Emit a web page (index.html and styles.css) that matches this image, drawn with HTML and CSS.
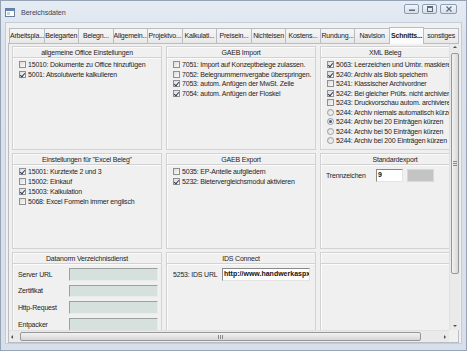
FILE: index.html
```html
<!DOCTYPE html>
<html lang="de">
<head>
<meta charset="utf-8">
<title>Bereichsdaten</title>
<link rel="stylesheet" href="styles.css">
</head>
<body>
<div class="window">
  <div class="titlebar">
    <svg class="appicon" width="10" height="9" viewBox="0 0 10 9"><rect x="0.5" y="0.5" width="9" height="8" fill="#fff" stroke="#6a7f99"/><rect x="1" y="1" width="8" height="2" fill="#5b84c4"/><rect x="2" y="4" width="3" height="3" fill="#c9d3df"/></svg>
    <span class="title">Bereichsdaten</span>
    <div class="controls">
      <span class="wbtn"><svg width="8" height="6" viewBox="0 0 8 6"><rect x="1" y="3.5" width="6" height="1.5" fill="#5d6b7c"/></svg></span>
      <span class="wbtn"><svg width="8" height="6" viewBox="0 0 8 6"><rect x="1.5" y="0.5" width="5" height="5" fill="none" stroke="#5d6b7c"/><rect x="1.5" y="0.5" width="5" height="1.5" fill="#5d6b7c"/></svg></span>
      <span class="wbtn close"><svg width="8" height="6" viewBox="0 0 8 6"><path d="M1.5 0.5 L6.5 5.5 M6.5 0.5 L1.5 5.5" stroke="#5d6b7c" stroke-width="1.2"/></svg></span>
    </div>
  </div>
  <div class="client">
    <div class="tabs">
      <span class="tab">Arbeitspla...</span>
      <span class="tab">Belegarten</span>
      <span class="tab">Belegn...</span>
      <span class="tab">Allgemein...</span>
      <span class="tab">Projektvo...</span>
      <span class="tab">Kalkulati...</span>
      <span class="tab">Preisein...</span>
      <span class="tab">Nichteisen</span>
      <span class="tab">Kostens...</span>
      <span class="tab">Rundung...</span>
      <span class="tab">Navision</span>
      <span class="tab active">Schnitts...</span>
      <span class="tab">sonstiges</span>
    </div>
    <div class="page">
      <div class="main">
        <div class="viewport">
          <div class="grid">
            <section class="cell">
              <div class="head">allgemeine Office Einstellungen</div>
              <div class="list">
                <label class="item"><span class="cb"></span>15010: Dokumente zu Office hinzufügen</label>
                <label class="item"><span class="cb on"></span>5001: Absolutwerte kalkulieren</label>
              </div>
            </section>
            <section class="cell">
              <div class="head">GAEB Import</div>
              <div class="list">
                <label class="item"><span class="cb"></span>7051: Import auf Konzeptbelege zulassen.</label>
                <label class="item"><span class="cb"></span>7052: Belegnummernvergabe überspringen.</label>
                <label class="item"><span class="cb on"></span>7053: autom. Anfügen der MwSt. Zeile</label>
                <label class="item"><span class="cb on"></span>7054: autom. Anfügen der Floskel</label>
              </div>
            </section>
            <section class="cell">
              <div class="head xml">XML Beleg</div>
              <div class="list">
                <label class="item"><span class="cb on"></span>5063: Leerzeichen und Umbr. maskieren</label>
                <label class="item"><span class="cb on"></span>5240: Archiv als Blob speichern</label>
                <label class="item"><span class="cb"></span>5241: Klassischer Archivordner</label>
                <label class="item"><span class="cb on"></span>5242: Bei gleicher Prüfs. nicht archivieren</label>
                <label class="item"><span class="cb"></span>5243: Druckvorschau autom. archivieren</label>
                <label class="item"><span class="rb"></span>5244: Archiv niemals automatisch kürzen</label>
                <label class="item"><span class="rb on"></span>5244: Archiv bei 20 Einträgen kürzen</label>
                <label class="item"><span class="rb"></span>5244: Archiv bei 50 Einträgen kürzen</label>
                <label class="item"><span class="rb"></span>5244: Archiv bei 200 Einträgen kürzen</label>
              </div>
            </section>

            <section class="cell">
              <div class="head">Einstellungen für "Excel Beleg"</div>
              <div class="list wide">
                <label class="item"><span class="cb on"></span>15001: Kurztexte 2 und 3</label>
                <label class="item"><span class="cb"></span>15002: Einkauf</label>
                <label class="item"><span class="cb on"></span>15003: Kalkulation</label>
                <label class="item"><span class="cb"></span>5068: Excel Formeln immer englisch</label>
              </div>
            </section>
            <section class="cell">
              <div class="head">GAEB Export</div>
              <div class="list wide">
                <label class="item"><span class="cb"></span>5035: EP-Anteile aufgliedern</label>
                <label class="item"><span class="cb on"></span>5232: Bietervergleichsmodul aktivieren</label>
              </div>
            </section>
            <section class="cell">
              <div class="head">Standardexport</div>
              <div class="form">
                <div class="frow">
                  <span class="flabel sep">Trennzeichen</span>
                  <span class="input white bold small">9</span>
                  <span class="input gray small"></span>
                </div>
              </div>
            </section>

            <section class="cell">
              <div class="head">Datanorm Verzeichnisdienst</div>
              <div class="form">
                <div class="frow"><span class="flabel">Server URL</span><span class="input dis"></span></div>
                <div class="frow"><span class="flabel">Zertifikat</span><span class="input dis"></span></div>
                <div class="frow"><span class="flabel">Http-Request</span><span class="input dis"></span></div>
                <div class="frow"><span class="flabel">Entpacker</span><span class="input dis"></span></div>
              </div>
            </section>
            <section class="cell">
              <div class="head">IDS Connect</div>
              <div class="form">
                <div class="frow"><span class="flabel ids">5253: IDS URL</span><span class="input white bold url">http://www.handwerkaspx.de/ids</span></div>
              </div>
            </section>
            <section class="cell">
              <div class="head"></div>
            </section>
          </div>
        </div>
        <div class="vscroll">
          <span class="arrow up"></span>
          <span class="vthumb"><span class="vgrip"></span></span>
          <span class="vspace"></span>
          <span class="arrow down"></span>
        </div>
      </div>
      <div class="hrow">
        <div class="hscroll">
          <span class="arrow left"></span>
          <span class="hthumb"><span class="hgrip"></span></span>
          <span class="hspace"></span>
          <span class="arrow right"></span>
        </div>
        <div class="corner"></div>
      </div>
    </div>
  </div>
</div>
</body>
</html>
```
FILE: styles.css
```css
* { box-sizing: border-box; }
html, body { margin: 0; padding: 0; background: #dfe6ef; }
body {
  font-family: "Liberation Sans", Arial, sans-serif;
  font-size: 7px;
  letter-spacing: -0.2px;
  color: #1e1e1e;
}
.window {
  width: 467px;
  height: 351px;
  display: flex;
  flex-direction: column;
  background: linear-gradient(#e6ecf4, #d9e2ed 40px, #d6dfea);
  border: 1px solid #95a3b4;
  overflow: hidden;
}
.titlebar {
  height: 21px;
  flex: 0 0 21px;
  display: flex;
  align-items: center;
  padding-left: 4px;
}
.appicon { margin-right: 6px; margin-top: 1px; }
.title { color: #3a4656; font-size: 7.2px; letter-spacing: -0.1px; margin-top: 1px; }
.controls {
  margin-left: auto;
  margin-right: 9px;
  display: flex;
  gap: 3px;
  align-self: flex-start;
  margin-top: 3px;
}
.wbtn {
  width: 15px;
  height: 10px;
  border: 1px solid #8e9cb0;
  border-radius: 2px;
  background: linear-gradient(#f1f5fa, #d6dfea);
  display: flex;
  align-items: center;
  justify-content: center;
}
.wbtn.close { width: 17px; }
.client {
  flex: 1;
  min-height: 0;
  margin: 0 4px 6px 4px;
  background: #f0f0f0;
  padding: 4px 2px 0 2px;
  display: flex;
  flex-direction: column;
  border: 1px solid #c3cdd9;
}
.tabs {
  display: flex;
  height: 16px;
  flex: 0 0 16px;
  margin-left: 1px;
  width: 450px;
  align-items: flex-end;
}
.tab {
  flex: 1 1 0;
  height: 15px;
  border: 1px solid #b9bdc3;
  border-bottom: none;
  margin-left: -1px;
  background: linear-gradient(#f6f6f6, #e8e8e8);
  text-align: center;
  line-height: 14px;
  white-space: nowrap;
  overflow: hidden;
  color: #222;
}
.tab:first-child { margin-left: 0; }
.tab.active {
  height: 17px;
  margin-bottom: -1px;
  background: #fbfbfb;
  font-weight: bold;
  position: relative;
  z-index: 1;
  line-height: 16px;
}
.page {
  flex: 1;
  min-height: 0;
  border: 1px solid #b9bdc3;
  display: flex;
  flex-direction: column;
  background: #f0f0f0;
}
.main { flex: 1; display: flex; min-height: 0; }
.viewport {
  width: 440px;
  flex: 0 0 440px;
  overflow: hidden;
  padding: 2px 0 0 3px;
}
.grid {
  display: grid;
  grid-template-columns: 150px 150px 150px;
  grid-template-rows: 104px 96px 100px;
  column-gap: 4px;
  row-gap: 3px;
  width: 460px;
}
.cell {
  border: 1px solid #d2d2d2;
  box-shadow: inset 1px 1px 0 #fbfbfb;
  min-width: 0;
  overflow: hidden;
}
.head {
  height: 11px;
  line-height: 10px;
  text-align: center;
  border-bottom: 1px solid #d2d2d2;
  border-top: 1px solid #fbfbfb;
  box-shadow: 0 1px 0 #fbfbfb;
  white-space: nowrap;
}
.head.xml { padding-right: 20px; }
.list { padding: 2px 0 0 6px; }
.item {
  display: flex;
  align-items: center;
  height: 9.5px;
  white-space: nowrap;
}
.list.wide .item { height: 9.8px; }
.cb, .rb {
  width: 7px;
  height: 7px;
  flex: 0 0 7px;
  margin-right: 2px;
  border: 1px solid #8f8f8f;
  background: linear-gradient(135deg, #dcdcdc, #fafafa);
  position: relative;
}
.cb.on::after {
  content: "";
  position: absolute;
  left: 1px;
  top: 0px;
  width: 2px;
  height: 4px;
  border-right: 1px solid #2b3a55;
  border-bottom: 1px solid #2b3a55;
  transform: rotate(40deg);
}
.rb { border-radius: 50%; border-color: #9a9a9a; }
.rb.on::after {
  content: "";
  position: absolute;
  left: 1px;
  top: 1px;
  width: 3px;
  height: 3px;
  border-radius: 50%;
  background: #3b5d8f;
}
.form {
  padding: 4px 0 0 5px;
  display: flex;
  flex-direction: column;
  gap: 4.2px;
}
.frow { display: flex; align-items: center; height: 12.5px; }
.flabel { width: 51px; flex: 0 0 51px; white-space: nowrap; }
.flabel.ids { width: 50px; flex-basis: 50px; padding-left: 1px; }
.flabel.sep { width: 50px; flex-basis: 50px; }
.input {
  height: 12.5px;
  border: 1px solid #8a8a8a;
  border-right-color: #e4e4e4;
  border-bottom-color: #e4e4e4;
  overflow: hidden;
  white-space: nowrap;
  line-height: 10.5px;
  padding-left: 1px;
}
.input.dis { width: 89px; background: #d6e0dd; border-color: #9aa19f #e8ecea #e8ecea #9aa19f; }
.input.white { background: #fff; color: #111; }
.input.bold { font-weight: bold; letter-spacing: 0; }
.input.url { width: 88px; font-size: 7px; }
.input.small { width: 27px; height: 13px; margin-right: 4px; }
.input.gray { background: #c4c4c4; border-color: #d8d8d8; }
.vscroll {
  width: 11px;
  flex: 0 0 11px;
  background: #eaeaea;
  border-left: 1px solid #e0e0e0;
  display: flex;
  flex-direction: column;
  align-items: center;
}
.arrow { width: 9px; height: 9px; flex: 0 0 9px; position: relative; }
.arrow::after {
  content: "";
  position: absolute;
  width: 0; height: 0;
  border: 2px solid transparent;
}
.arrow.up::after { left: 2.5px; top: 1.5px; border-bottom: 2px solid #505050; border-top: none; }
.arrow.down::after { left: 2.5px; top: 4px; border-top: 2px solid #505050; border-bottom: none; }
.arrow.left::after { left: 2px; top: 2.5px; border-right: 2px solid #505050; border-left: none; }
.arrow.right::after { left: 4px; top: 2.5px; border-left: 2px solid #505050; border-right: none; }
.vthumb {
  width: 8px;
  height: 221px;
  flex: 0 0 221px;
  border: 1px solid #979797;
  border-radius: 2px;
  background: linear-gradient(90deg, #f2f2f2, #d8d8d8);
  display: flex;
  justify-content: center;
  align-items: center;
}
.vgrip { width: 4px; height: 5px; border-top: 1px solid #8a8a8a; border-bottom: 1px solid #8a8a8a; position: relative; }
.vgrip::after { content: ""; position: absolute; left: 0; right: 0; top: 1px; border-top: 1px solid #8a8a8a; }
.vspace { flex: 1; }
.hrow { display: flex; height: 12px; flex: 0 0 12px; }
.hscroll {
  width: 440px;
  flex: 0 0 440px;
  background: #eaeaea;
  border-top: 1px solid #e0e0e0;
  display: flex;
  align-items: center;
}
.hthumb {
  width: 401px;
  flex: 0 0 401px;
  height: 9px;
  margin-left: 2px;
  border: 1px solid #979797;
  border-radius: 2px;
  background: linear-gradient(#f2f2f2, #d6d6d6);
  display: flex;
  justify-content: center;
  align-items: center;
}
.hgrip { width: 5px; height: 4px; border-left: 1px solid #8a8a8a; border-right: 1px solid #8a8a8a; position: relative; }
.hgrip::after { content: ""; position: absolute; top: 0; bottom: 0; left: 1px; border-left: 1px solid #8a8a8a; }
.hspace { flex: 1; }
.corner { flex: 1; background: #f0f0f0; }
```
